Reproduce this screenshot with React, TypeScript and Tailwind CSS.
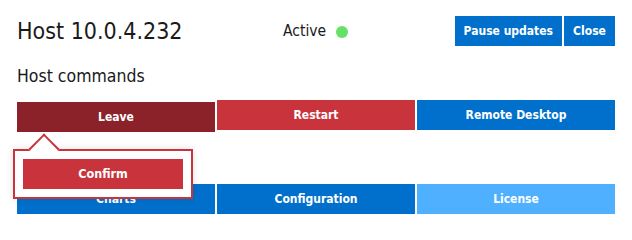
import React from "react";

export default function App() {
  return (
    <div className="w-[632px] h-[230px] bg-white px-[17px] pt-[16px] text-[#1a1a1a] [font-family:'DejaVu_Sans_Condensed','DejaVu_Sans',sans-serif]">
      <div className="flex items-center h-[30px]">
        <div className="text-[23px] leading-none w-[266px]">Host 10.0.4.232</div>
        <div className="flex items-center text-[15.5px] leading-none mt-[2px]">
          <span>Active</span>
          <span className="ml-[10px] w-[12px] h-[12px] rounded-full bg-[#66e066]" />
        </div>
        <div className="ml-auto flex gap-[2px] h-[30px]">
          <button className="bg-[#0070cc] text-white font-bold text-[12px] px-[9px]">Pause updates</button>
          <button className="bg-[#0070cc] text-white font-bold text-[12px] px-[9px] w-[51px]">Close</button>
        </div>
      </div>
      <div className="mt-[18px] text-[17.5px] leading-[24px]">Host commands</div>
      <div className="mt-[12px] grid grid-cols-3 gap-[2px]">
        <div className="relative h-[30px]">
          <button className="w-full h-[30px] translate-y-[2px] bg-[#8b2229] text-white font-bold text-[12px]">Leave</button>
          <div className="absolute left-[-4px] top-[49px] w-[180px] h-[50px] border-2 border-[#c9343c] bg-white shadow-[0_0_8px_rgba(0,0,0,0.12)] p-[8px] z-20">
            <div className="absolute left-[18px] top-[-13px] w-[22px] h-[22px] rotate-45 bg-white border-t-2 border-l-2 border-[#c9343c]" />
            <button className="relative z-10 w-full h-[30px] bg-[#c9343c] text-white font-bold text-[12.5px]">Confirm</button>
          </div>
        </div>
        <button className="h-[30px] bg-[#c9343c] text-white font-bold text-[12px]">Restart</button>
        <button className="h-[30px] bg-[#0070cc] text-white font-bold text-[12px]">Remote Desktop</button>
      </div>
      <div className="mt-[54px] grid grid-cols-3 gap-[2px]">
        <button className="h-[30px] bg-[#0070cc] text-white font-bold text-[12px]">Charts</button>
        <button className="h-[30px] bg-[#0070cc] text-white font-bold text-[12px]">Configuration</button>
        <button className="h-[30px] bg-[#4fb0ff] text-white font-bold text-[12px]">License</button>
      </div>
    </div>
  );
}
